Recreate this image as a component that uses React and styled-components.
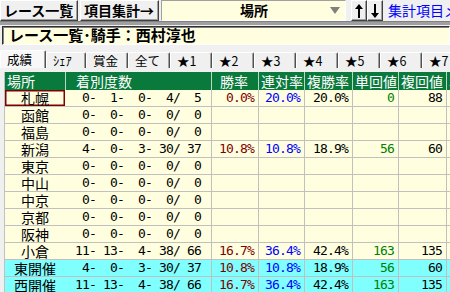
import React from 'react';
import styled, { createGlobalStyle } from 'styled-components';

const JP = `"Noto Sans CJK JP", "Noto Sans", sans-serif`;
const MONO = `"DejaVu Sans Mono", "Liberation Mono", monospace`;

const Global = createGlobalStyle`
  html, body { margin: 0; padding: 0; background: #f0f0f0; overflow: hidden; }
  body { font-family: ${JP}; }
  * { box-sizing: border-box; }
`;

const Page = styled.div`
  width: 450px;
  height: 292px;
  overflow: hidden;
  background: #f0f0f0;
  display: flex;
  flex-direction: column;
`;

const TopBar = styled.div`
  height: 21px;
  display: flex;
  flex-shrink: 0;
  overflow: hidden;
`;

const ToolButton = styled.div`
  flex-shrink: 0;
  width: ${p => p.$w}px;
  height: 21px;
  margin-right: ${p => p.$mr || 0}px;
  padding-left: 3px;
  font: bold 14px/19px ${JP};
  color: #000;
  background: #f0f0f0;
  border: 1px solid;
  border-color: #ffffff #404040 #404040 #ffffff;
  box-shadow: inset -1px -1px 0 #a0a0a0;
  white-space: nowrap;
`;

const Combo = styled.div`
  flex-shrink: 0;
  width: 185px;
  height: 21px;
  margin-right: 5px;
  display: flex;
  align-items: center;
  padding-left: 78px;
  padding-right: 5px;
  background: #ffffe0;
  border: 1px solid;
  border-color: #a0a0a0 #ffffff #ffffff #a0a0a0;
  font: bold 14px/19px ${JP};
`;

const Spacer = styled.span`
  flex: 1;
`;

const ArrowButton = styled.div`
  flex-shrink: 0;
  width: 16px;
  height: 21px;
  display: flex;
  align-items: center;
  justify-content: center;
  background: #f0f0f0;
  border: 1px solid;
  border-color: #ffffff #404040 #404040 #ffffff;
  box-shadow: inset -1px -1px 0 #a0a0a0;
`;

const MenuLink = styled.div`
  flex-shrink: 0;
  padding-left: 5px;
  font: 14px/21px ${JP};
  color: #0000ff;
  white-space: nowrap;
`;

const Band = styled.div`
  height: 4px;
  flex-shrink: 0;
  background: #a0a0a0;
  border-top: 1px solid #808080;
`;

const TitleBox = styled.div`
  height: 19px;
  margin: 1px 0 0 2px;
  flex-shrink: 0;
  padding-left: 6px;
  background: #ffffe0;
  border: 1px solid;
  border-color: #303030 #ffffff #ffffff #303030;
  box-shadow: inset 1px 1px 0 #808080;
  font: bold 15px/16px ${JP};
  white-space: nowrap;
`;

const TabStrip = styled.div`
  height: 18px;
  margin-top: 5px;
  flex-shrink: 0;
  display: flex;
  align-items: flex-end;
`;

const Tab = styled.div`
  width: ${p => p.$w}px;
  flex-shrink: 0;
  height: ${p => (p.$active ? 18 : 16)}px;
  padding-left: 6px;
  font: 12.5px/${p => (p.$active ? 17 : 15)}px ${JP};
  color: #000;
  background: ${p => (p.$active ? '#f8f8f8' : '#f0f0f0')};
  border-top: 1px solid #ffffff;
  border-left: 1px solid #ffffff;
  border-right: 1px solid #505050;
  box-shadow: inset -1px 0 0 #a0a0a0;
  border-radius: 2px 2px 0 0;
  white-space: nowrap;
`;

const TableArea = styled.div`
  margin-top: 4px;
  margin-left: 4px;
  border-left: 1px solid #c0c0c0;
  flex: 1;
  overflow: hidden;
`;

const COLS = '60px 146px 47px 46px 48px 46px 48px 47px';

const HeaderRow = styled.div`
  display: grid;
  grid-template-columns: ${COLS};
  height: 18px;
  background: #0a7a3c;
`;

const HeaderCell = styled.div`
  padding-left: ${p => p.$pl ?? 2}px;
  font: 14px/18px ${JP};
  color: #ffffff;
  border-left: ${p => (p.$first ? 'none' : '1px solid #b8d8c4')};
  white-space: nowrap;
  overflow: hidden;
`;

const Row = styled.div`
  display: grid;
  grid-template-columns: ${COLS};
  height: 17px;
  background: ${p => (p.$cyan ? '#80ffff' : '#ffffe0')};
`;

const PlaceCell = styled.div`
  text-align: center;
  font: 14px/16px ${JP};
  color: #000;
  border-bottom: 1px solid #c0c0c0;
  box-shadow: ${p => (p.$selected ? 'inset 0 0 0 1.5px #800000' : 'none')};
  white-space: nowrap;
`;

const CountCell = styled.div`
  padding-left: 10px;
  font: 13px/16px ${MONO};
  letter-spacing: -0.83px;
  white-space: pre;
  color: #000;
  border-bottom: 1px solid #c0c0c0;
`;

const NumCell = styled.div`
  padding-right: 4px;
  text-align: right;
  font: 13px/16px ${MONO};
  letter-spacing: -0.83px;
  white-space: pre;
  color: ${p => p.$color || '#000'};
  border-left: 1px solid #c0c0c0;
  border-bottom: 1px solid #c0c0c0;
`;

const Arrow = ({ up }) => (
  <svg width="10" height="16" viewBox="0 0 10 16">
    {up ? (
      <>
        <rect x="4" y="4" width="2" height="11" fill="#000" />
        <polygon points="5,1 1,6 9,6" fill="#000" />
      </>
    ) : (
      <>
        <rect x="4" y="1" width="2" height="11" fill="#000" />
        <polygon points="5,15 1,10 9,10" fill="#000" />
      </>
    )}
  </svg>
);

const Triangle = () => (
  <svg width="10" height="8" viewBox="0 0 10 8">
    <polygon points="0,0 10,0 5,7" fill="#808080" />
  </svg>
);

const tabs = [
  { label: '成績', w: 46, active: true },
  { label: 'ｼｪｱ', w: 40 },
  { label: '賞金', w: 42 },
  { label: '全て', w: 42 },
  { label: '★1', w: 42 },
  { label: '★2', w: 42 },
  { label: '★3', w: 42 },
  { label: '★4', w: 42 },
  { label: '★5', w: 42 },
  { label: '★6', w: 42 },
  { label: '★7', w: 42 },
];

const Z = ' 0-  0-  0-  0/  0';
const A = ' 4-  0-  3- 30/ 37';
const B = '11- 13-  4- 38/ 66';
const empty = ['', '', '', '', ''];
const vA = ['10.8%', '10.8%', '18.9%', '56', '60'];
const vB = ['16.7%', '36.4%', '42.4%', '163', '135'];

const rows = [
  { place: '札幌', cnt: ' 0-  1-  0-  4/  5', v: ['0.0%', '20.0%', '20.0%', '0', '88'], selected: true },
  { place: '函館', cnt: Z, v: empty },
  { place: '福島', cnt: Z, v: empty },
  { place: '新潟', cnt: A, v: vA },
  { place: '東京', cnt: Z, v: empty },
  { place: '中山', cnt: Z, v: empty },
  { place: '中京', cnt: Z, v: empty },
  { place: '京都', cnt: Z, v: empty },
  { place: '阪神', cnt: Z, v: empty },
  { place: '小倉', cnt: B, v: vB },
  { place: '東開催', cnt: A, v: vA, cyan: true },
  { place: '西開催', cnt: B, v: vB, cyan: true },
];

const valueColors = ['#800000', '#0000ff', '#000000', '#008000', '#000000'];

export default function App() {
  return (
    <Page>
      <Global />
      <TopBar>
        <ToolButton $w={78} $mr={2}>レース一覧</ToolButton>
        <ToolButton $w={79} $mr={2}>項目集計→</ToolButton>
        <Combo>
          <span>場所</span>
          <Spacer />
          <Triangle />
        </Combo>
        <ArrowButton><Arrow up /></ArrowButton>
        <ArrowButton><Arrow /></ArrowButton>
        <MenuLink>集計項目メニュー</MenuLink>
      </TopBar>
      <Band />
      <TitleBox>レース一覧･騎手：西村淳也</TitleBox>
      <TabStrip>
        {tabs.map(t => (
          <Tab key={t.label} $w={t.w} $active={t.active}>{t.label}</Tab>
        ))}
      </TabStrip>
      <TableArea>
        <HeaderRow>
          <HeaderCell $first $pl={2}>場所</HeaderCell>
          <HeaderCell $pl={10}>着別度数</HeaderCell>
          <HeaderCell $pl={8}>勝率</HeaderCell>
          <HeaderCell>連対率</HeaderCell>
          <HeaderCell>複勝率</HeaderCell>
          <HeaderCell>単回値</HeaderCell>
          <HeaderCell>複回値</HeaderCell>
          <HeaderCell>単</HeaderCell>
        </HeaderRow>
        {rows.map(r => (
          <Row key={r.place} $cyan={r.cyan}>
            <PlaceCell $selected={r.selected}>{r.place}</PlaceCell>
            <CountCell>{r.cnt}</CountCell>
            {r.v.map((val, i) => (
              <NumCell key={i} $color={valueColors[i]}>{val}</NumCell>
            ))}
            <NumCell />
          </Row>
        ))}
      </TableArea>
    </Page>
  );
}
